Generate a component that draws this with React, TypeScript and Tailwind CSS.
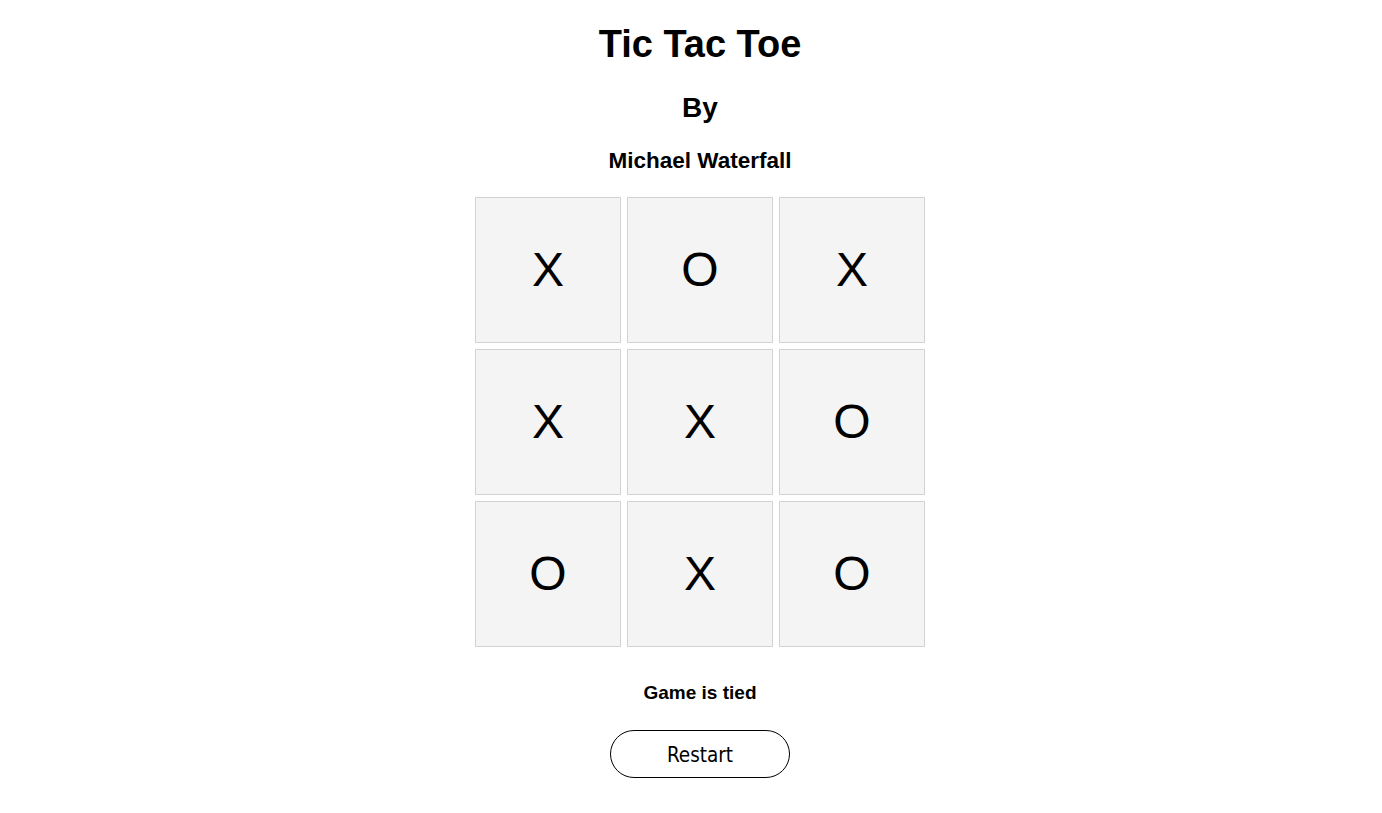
const board = ["X", "O", "X", "X", "X", "O", "O", "X", "O"];

export default function App() {
  return (
    <div
      className="flex min-h-screen flex-col items-center bg-white pl-[18px] text-black"
      style={{ fontFamily: '"Liberation Sans", Arial, sans-serif' }}
    >
      <h1 className="mt-[24px] text-[38px] font-bold leading-[40px]">Tic Tac Toe</h1>
      <h2 className="mt-[28px] text-[28px] font-bold leading-[32px]">By</h2>
      <h3 className="mt-[24px] text-[22.5px] font-bold leading-[26px]">Michael Waterfall</h3>
      <div className="mt-[23px] grid grid-cols-[repeat(3,146px)] gap-[6px]">
        {board.map((v, i) => (
          <div
            key={i}
            className="flex h-[146px] w-[146px] items-center justify-center border border-[#d3d3d3] bg-[#f4f4f4] text-[48px] leading-none"
          >
            {v}
          </div>
        ))}
      </div>
      <p className="mt-[34px] text-[19px] font-bold leading-[24px]">Game is tied</p>
      <button
        className="mt-[25px] h-[48px] w-[180px] rounded-full border border-black bg-white pt-[3px] text-[20.5px]"
        style={{ fontFamily: '"DejaVu Sans Condensed", "DejaVu Sans", sans-serif' }}
      >
        Restart
      </button>
    </div>
  );
}
